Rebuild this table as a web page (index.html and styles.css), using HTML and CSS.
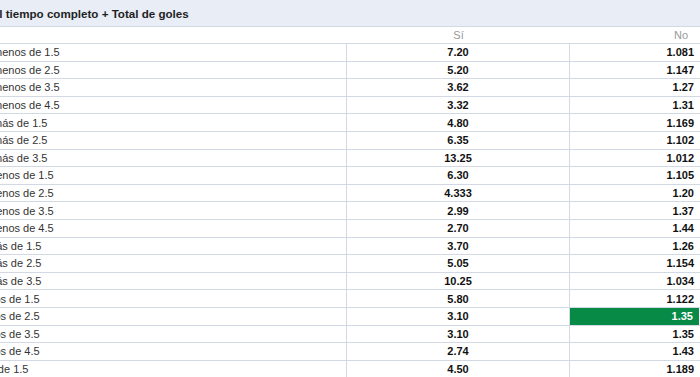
FILE: index.html
```html
<!DOCTYPE html>
<html lang="es">
<head>
<meta charset="utf-8">
<title>Resultado del tiempo completo + Total de goles</title>
<link rel="stylesheet" href="styles.css">
</head>
<body>
<section class="market">
  <header class="market-title"><span class="title-text">del tiempo completo + Total de goles</span></header>
  <div class="row head">
    <div class="cell label"></div>
    <div class="cell yes">Sí</div>
    <div class="cell no">No</div>
  </div>
  <div class="row"><div class="cell label ga">menos de 1.5</div><div class="cell yes">7.20</div><div class="cell no">1.081</div></div>
  <div class="row"><div class="cell label ga">menos de 2.5</div><div class="cell yes">5.20</div><div class="cell no">1.147</div></div>
  <div class="row"><div class="cell label ga">menos de 3.5</div><div class="cell yes">3.62</div><div class="cell no">1.27</div></div>
  <div class="row"><div class="cell label ga">menos de 4.5</div><div class="cell yes">3.32</div><div class="cell no">1.31</div></div>
  <div class="row"><div class="cell label ga">más de 1.5</div><div class="cell yes">4.80</div><div class="cell no">1.169</div></div>
  <div class="row"><div class="cell label ga">más de 2.5</div><div class="cell yes">6.35</div><div class="cell no">1.102</div></div>
  <div class="row"><div class="cell label ga">más de 3.5</div><div class="cell yes">13.25</div><div class="cell no">1.012</div></div>
  <div class="row"><div class="cell label gb">menos de 1.5</div><div class="cell yes">6.30</div><div class="cell no">1.105</div></div>
  <div class="row"><div class="cell label gb">menos de 2.5</div><div class="cell yes">4.333</div><div class="cell no">1.20</div></div>
  <div class="row"><div class="cell label gb">menos de 3.5</div><div class="cell yes">2.99</div><div class="cell no">1.37</div></div>
  <div class="row"><div class="cell label gb">menos de 4.5</div><div class="cell yes">2.70</div><div class="cell no">1.44</div></div>
  <div class="row"><div class="cell label gb">más de 1.5</div><div class="cell yes">3.70</div><div class="cell no">1.26</div></div>
  <div class="row"><div class="cell label gb">más de 2.5</div><div class="cell yes">5.05</div><div class="cell no">1.154</div></div>
  <div class="row"><div class="cell label gb">más de 3.5</div><div class="cell yes">10.25</div><div class="cell no">1.034</div></div>
  <div class="row"><div class="cell label gc">menos de 1.5</div><div class="cell yes">5.80</div><div class="cell no">1.122</div></div>
  <div class="row"><div class="cell label gc">menos de 2.5</div><div class="cell yes">3.10</div><div class="cell no selected">1.35</div></div>
  <div class="row"><div class="cell label gc">menos de 3.5</div><div class="cell yes">3.10</div><div class="cell no">1.35</div></div>
  <div class="row"><div class="cell label gc">menos de 4.5</div><div class="cell yes">2.74</div><div class="cell no">1.43</div></div>
  <div class="row"><div class="cell label gd">más de 1.5</div><div class="cell yes">4.50</div><div class="cell no">1.189</div></div>
</section>
</body>
</html>
```

FILE: styles.css
```css
html, body {
  margin: 0;
  padding: 0;
  overflow: hidden;
  background: #ffffff;
}

body {
  font-family: "Liberation Sans", Arial, sans-serif;
  color: #222;
}

.market {
  width: 700px;
}

.market-title {
  height: 26px;
  background: #e9edf6;
  border-bottom: 1px solid #d3d9e4;
  display: flex;
  align-items: center;
  font-size: 11.6px;
  font-weight: bold;
  color: #1f1f1f;
  white-space: nowrap;
}

.title-text {
  text-indent: -14.3px;
  display: block;
}

.row {
  display: grid;
  grid-template-columns: 347px 223px 130px;
  height: 17.6px;
  box-sizing: border-box;
  border-bottom: 1px solid #d3d9e4;
  font-size: 11px;
}

.row.head {
  height: 17px;
  font-size: 11px;
}

.cell {
  display: flex;
  align-items: center;
  white-space: nowrap;
  box-sizing: border-box;
}

.label {
  color: #333;
  border-right: 1px solid #d3d9e4;
}

.yes {
  justify-content: center;
  font-weight: bold;
  color: #111;
  border-right: 1px solid #d3d9e4;
}

.no {
  justify-content: flex-end;
  padding-right: 6px;
  font-weight: bold;
  color: #111;
}

.head .cell {
  border-right: none;
  font-weight: normal;
  color: #999;
}

.head .no {
  padding-right: 12px;
}

.ga { text-indent: -7px; }
.gb { text-indent: -13px; }
.gc { text-indent: -27px; }
.gd { text-indent: -26px; }

.selected {
  background: #078a46;
  color: #ffffff;
  margin-right: 1px;
}
```
